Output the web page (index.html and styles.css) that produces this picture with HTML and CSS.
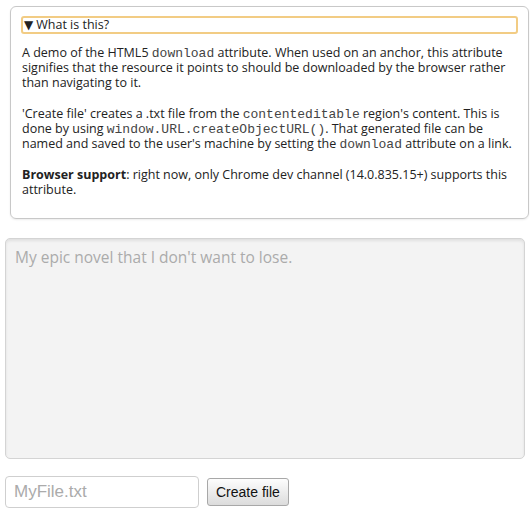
FILE: index.html
```html
<!DOCTYPE html>
<html>
<head>
<meta charset="utf-8">
<link rel="stylesheet" href="styles.css">
</head>
<body>
<details class="info" open>
  <summary class="info-summary">What is this?</summary>
  <p class="info-p first">A demo of the HTML5 <code>download</code> attribute. When used on an anchor, this attribute signifies that the resource it points to should be downloaded by the browser rather than navigating to it.</p>
  <p class="info-p">'Create file' creates a .txt file from the <code>contenteditable</code> region's content. This is done by using <code>window.URL.createObjectURL()</code>. That generated file can be named and saved to the user's machine by setting the <code>download</code> attribute on a link.</p>
  <p class="info-p"><strong>Browser support</strong>: right now, only Chrome dev channel (14.0.835.15+) supports this attribute.</p>
</details>
<textarea class="editor" placeholder="My epic novel that I don't want to lose."></textarea>
<div class="controls">
  <input class="filename" type="text" placeholder="MyFile.txt">
  <button class="create">Create file</button>
</div>
</body>
</html>
```
FILE: styles.css
```css
html, body {
  margin: 0;
  padding: 0;
  background: #fff;
}
body {
  padding: 6px 0 0 5px;
  font-family: "Open Sans", sans-serif;
  font-size: 12.5px;
  color: #222;
  width: 525px;
  overflow: hidden;
}
.info {
  margin-left: 5px;
  width: 497px;
  border: 1px solid #c8c8c8;
  border-radius: 6px;
  padding: 9px 10px 5px 10px;
  box-shadow: 0 1px 2px rgba(0,0,0,0.08);
}
.info-summary {
  display: block;
  height: 14px;
  line-height: 14px;
  border: 2px solid #f2cc84;
  border-radius: 3px;
  padding: 0 0 0 1px;
  font-size: 12.5px;
  outline: none;
  cursor: pointer;
}
.info-summary::before {
  content: "\25BC";
  font-family: "DejaVu Sans", sans-serif;
  font-size: 12px;
  margin-right: 3px;
}
.info-summary::-webkit-details-marker { display: none; }
.info-p {
  margin: 0 0 16px 1px;
  line-height: 15px;
}
.info-p.first { margin-top: 11px; }
code {
  font-family: "Liberation Mono", monospace;
  font-size: 13px;
  line-height: 10px;
  color: #444;
}
strong { font-weight: 700; }
.editor {
  display: block;
  margin-top: 19px;
  width: 520px;
  height: 221px;
  box-sizing: border-box;
  border: 1px solid #d4d4d4;
  border-radius: 5px;
  background: #f3f3f3;
  box-shadow: inset 0 2px 3px rgba(0,0,0,0.08);
  padding: 7px 9px;
  font-family: "Open Sans", sans-serif;
  font-size: 15.5px;
  color: #333;
  resize: none;
}
.editor::placeholder { color: #ababab; }
.controls {
  display: flex;
  align-items: center;
  gap: 8px;
  margin-top: 17px;
}
.filename {
  width: 194px;
  height: 32px;
  box-sizing: border-box;
  border: 1px solid #cfcfcf;
  border-radius: 4px;
  padding: 0 8px;
  font-family: "Liberation Sans", Arial, sans-serif;
  font-size: 17px;
  color: #333;
}
.filename::placeholder { color: #ababab; }
.create {
  height: 28px;
  box-sizing: border-box;
  padding: 0 8px;
  border: 1px solid #a8a8a8;
  border-radius: 3px;
  background: linear-gradient(#fdfdfd, #dcdcdc);
  font-family: "Liberation Sans", Arial, sans-serif;
  font-size: 14px;
  color: #111;
}
```
